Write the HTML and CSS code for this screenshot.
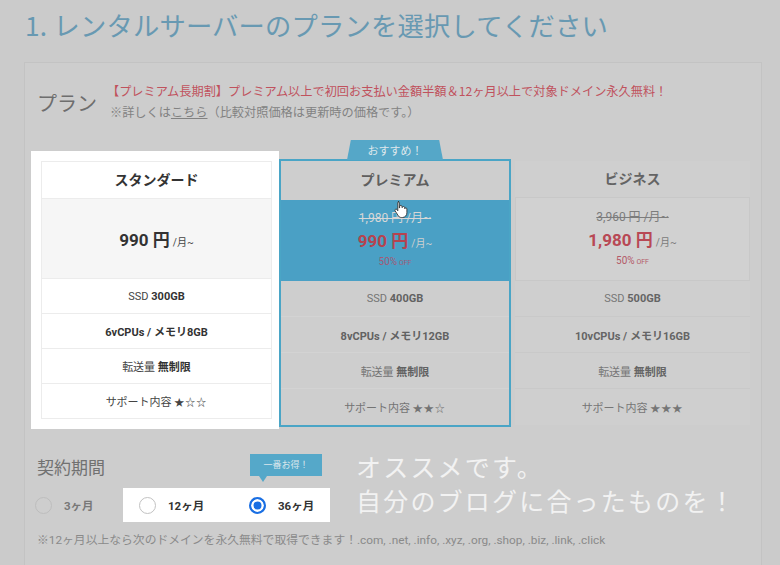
FILE: index.html
```html
<!DOCTYPE html>
<html lang="ja">
<head>
<meta charset="utf-8">
<title>プラン選択</title>
<link rel="stylesheet" href="styles.css">
</head>
<body>
<h1 class="title">1. レンタルサーバーのプランを選択してください</h1>
<div class="panel">
  <div class="plan-head">
    <div class="plan-label">プラン</div>
    <div class="plan-notes">
      <p class="note-red">【プレミアム長期割】プレミアム以上で初回お支払い金額半額＆12ヶ月以上で対象ドメイン永久無料！</p>
      <p class="note-gray">※詳しくは<span class="link">こちら</span>（比較対照価格は更新時の価格です。）</p>
    </div>
  </div>

  <div class="plans">
    <div class="col std">
      <div class="cell head">スタンダード</div>
      <div class="cell price"><div class="now"><b>990 円</b><span class="per">/月~</span></div></div>
      <div class="cell"><span>SSD <b>300GB</b></span></div>
      <div class="cell"><span><b>6vCPUs / メモリ8GB</b></span></div>
      <div class="cell"><span>転送量 <b>無制限</b></span></div>
      <div class="cell"><span>サポート内容 <span class="stars">★☆☆</span></span></div>
    </div>

    <div class="col prem">
      <div class="tab">おすすめ！</div>
      <div class="cell head">プレミアム</div>
      <div class="cell price">
        <div class="old">1,980 円 /月~</div>
        <div class="now"><b>990 円</b><span class="per">/月~</span></div>
        <div class="off">50%<small> OFF</small></div>
        <svg class="cursor" width="14" height="18" viewBox="0 0 14 18"><path d="M4 1.5c.8 0 1.3.6 1.3 1.3V8l.3-.1V6.6c0-.7.5-1.2 1.2-1.2s1.2.5 1.2 1.2v1l.3-.1c.1-.6.6-1 1.2-1 .7 0 1.2.5 1.2 1.2v1c.1-.5.6-.8 1.1-.8.7 0 1.1.5 1.1 1.200v3.7c0 2.5-1.8 4.7-4.4 4.7H7.4c-1.3 0-2.3-.6-3-1.6L1.2 11c-.4-.6-.3-1.3.3-1.7.5-.3 1.200-.2 1.500.3l.8 1.2V2.8c0-.7.5-1.3 1.2-1.3z" fill="#fff" stroke="#333" stroke-width=".9"/></svg>
      </div>
      <div class="cell"><span>SSD <b>400GB</b></span></div>
      <div class="cell"><span><b>8vCPUs / メモリ12GB</b></span></div>
      <div class="cell"><span>転送量 <b>無制限</b></span></div>
      <div class="cell"><span>サポート内容 <span class="stars">★★☆</span></span></div>
    </div>

    <div class="col biz">
      <div class="cell head">ビジネス</div>
      <div class="cell price">
        <div class="old">3,960 円 /月~</div>
        <div class="now"><b>1,980 円</b><span class="per">/月~</span></div>
        <div class="off">50%<small> OFF</small></div>
      </div>
      <div class="cell"><span>SSD <b>500GB</b></span></div>
      <div class="cell"><span><b>10vCPUs / メモリ16GB</b></span></div>
      <div class="cell"><span>転送量 <b>無制限</b></span></div>
      <div class="cell"><span>サポート内容 <span class="stars">★★★</span></span></div>
    </div>
  </div>

  <div class="term">
    <div class="term-label">契約期間</div>
    <div class="radios">
      <label class="radio dim"><span class="circle"></span>3ヶ月</label>
      <div class="hl">
        <label class="radio"><span class="circle"></span>12ヶ月</label>
        <label class="radio sel"><span class="circle on"></span>36ヶ月<span class="tip">一番お得！</span></label>
      </div>
    </div>
    <p class="domain-note">※12ヶ月以上なら次のドメインを永久無料で取得できます！.com, .net, .info, .xyz, .org, .shop, .biz, .link, .click</p>
  </div>

  <div class="overlay-text">オススメです。<br>自分のブログに合ったものを！</div>
</div>
</body>
</html>
```
FILE: styles.css
```css
html, body {
  margin: 0;
  padding: 0;
  background: #cbcbcb;
  font-family: Roboto, "Noto Sans CJK JP", sans-serif;
  width: 780px;
  height: 565px;
  overflow: hidden;
}

.title {
  margin: 0;
  padding: 6px 0 0 25px;
  font-family: "Noto Sans CJK JP", sans-serif;
  font-weight: 400;
  font-size: 26.3px;
  line-height: 38px;
  color: #6899b2;
  letter-spacing: 0.2px;
}

.panel {
  position: relative;
  margin: 18px 0 0 24px;
  width: 738px;
  height: 520px;
  border: 1px solid #c3c3c3;
  border-bottom: none;
  background: #cdcdcd;
  box-sizing: border-box;
  padding-top: 18px;
}

.plan-head {
  display: flex;
  align-items: center;
  padding-left: 12px;
}

.plan-label {
  font-family: "Noto Sans CJK JP", sans-serif;
  font-size: 20px;
  color: #6e6e6e;
  width: 70px;
}

.plan-notes p {
  margin: 0;
  font-family: "Noto Sans CJK JP", sans-serif;
  font-size: 12.2px;
  line-height: 21px;
}

.note-red { color: #c0525d; }
.note-gray { color: #828282; padding-left: 3px; }
.link { text-decoration: underline; }

.plans {
  display: flex;
  align-items: flex-start;
  margin: 28px 0 0 6px;
}

.col {
  display: flex;
  flex-direction: column;
  box-sizing: border-box;
}

.cell {
  display: flex;
  align-items: center;
  justify-content: center;
  font-size: 11px;
  height: 35px;
  box-sizing: border-box;
  font-family: Roboto, "Noto Sans CJK JP", sans-serif;
}

.cell.head {
  height: 38px;
  font-size: 14px;
  font-weight: 700;
  font-family: "Noto Sans CJK JP", sans-serif;
  padding-bottom: 3px;
}

.cell.price {
  height: 80px;
  flex-direction: column;
  position: relative;
}

.now b { font-size: 17px; font-weight: 700; }
.per { font-size: 10px; margin-left: 3px; }
.old { font-size: 12px; text-decoration: line-through; line-height: 17px; }
.off { font-size: 10px; line-height: 16px; margin-top: 2px; }
.off small { font-size: 7px; }
.stars { font-size: 10px; letter-spacing: 1px; }

/* Standard (highlighted) */
.std {
  width: 248px;
  padding: 10px 7px 10px 10px;
  background: #ffffff;
  color: #333;
}
.std .cell {
  border: 1px solid #ececec;
  border-top: none;
  color: #444;
}
.std .cell.head { border-top: 1px solid #ececec; color: #333; }
.std .cell.price { background: #f6f6f6; }
.std .cell b { color: #333; }

/* Premium */
.prem {
  position: relative;
  width: 232px;
  margin-top: 8px;
  border: 2px solid #4aa5c6;
  background: #cecece;
  color: #747474;
}
.prem .cell { height: 36px; border-bottom: 1px solid #d3d3d3; }
.prem .cell:last-child { border-bottom: none; }
.prem .cell.head { height: 39px; color: #5f5f5f; border-bottom: none; }
.prem .cell.price { height: 81px; background: #4aa0c5; border-bottom: none; }
.prem .cell b { color: #626262; }
.prem .old { color: #d7d7d7; }
.prem .now b { color: #b5434f; }
.prem .per { color: #d0d0d0; }
.prem .off { color: #a25a77; }

.tab {
  position: absolute;
  top: -21px;
  left: 66px;
  width: 96px;
  height: 20px;
  background: #55a7c8;
  color: #dfe8ec;
  font-family: "Noto Sans CJK JP", sans-serif;
  font-size: 11px;
  display: flex;
  align-items: center;
  justify-content: center;
  clip-path: polygon(4% 0, 96% 0, 100% 100%, 0 100%);
}

.cursor {
  position: absolute;
  left: 113px;
  top: 0px;
}

/* Business */
.biz {
  width: 235px;
  margin: 10px 0 0 4px;
  color: #767676;
}
.biz .cell { height: 36px; border-bottom: 1px solid #c9c9c9; background: #cfcfcf; }
.biz .cell:last-child { border-bottom: none; }
.biz .cell.head { color: #646464; border-bottom: none; }
.biz .cell.price { height: 84px; background: #d1d1d1; border: 1px solid #c8c8c8; }
.biz .cell b { color: #656565; }
.biz .old { color: #7c7c7c; }
.biz .now b { color: #b84854; }
.biz .per { color: #7a7a7a; }
.biz .off { color: #b45a68; }

/* Term */
.term {
  margin-top: 26px;
  padding-left: 12px;
}
.term-label {
  font-family: "Noto Sans CJK JP", sans-serif;
  font-size: 17px;
  color: #717171;
  line-height: 24px;
}
.radios {
  display: flex;
  align-items: center;
  margin-top: 9px;
}
.radio {
  display: flex;
  align-items: center;
  font-family: Roboto, "Noto Sans CJK JP", sans-serif;
  font-size: 11.5px;
  font-weight: 700;
  color: #333;
  position: relative;
}
.radio.dim { color: #787878; width: 88px; margin-left: -2px; }
.circle {
  width: 17px;
  height: 17px;
  border-radius: 50%;
  border: 1px solid #c2c2c2;
  background: #fff;
  margin-right: 12px;
  box-sizing: border-box;
}
.dim .circle { background: #cecece; border-color: #bdbdbd; }
.circle.on {
  border: 2px solid #1a6fe3;
  background: #1a6fe3;
  box-shadow: inset 0 0 0 2.5px #fff;
}
.hl {
  display: flex;
  align-items: center;
  background: #fff;
  height: 34px;
  width: 207px;
  box-sizing: border-box;
  padding-left: 16px;
}
.hl .radio:first-child { width: 110px; }

.tip {
  position: absolute;
  left: 1px;
  top: -43px;
  width: 72px;
  height: 22px;
  background: #55a8c9;
  color: #d9e6ec;
  font-size: 9px;
  font-weight: 400;
  font-family: "Noto Sans CJK JP", sans-serif;
  display: flex;
  align-items: center;
  justify-content: center;
}
.tip::after {
  content: "";
  position: absolute;
  left: 9px;
  bottom: -6px;
  border-left: 4px solid transparent;
  border-right: 4px solid transparent;
  border-top: 6px solid #55a8c9;
}

.domain-note {
  margin: 8px 0 0 0;
  font-family: Roboto, "Noto Sans CJK JP", sans-serif;
  font-size: 11.8px;
  color: #8a8a8a;
  letter-spacing: 0;
}

.overlay-text {
  position: absolute;
  left: 331px;
  top: 386px;
  font-family: "Noto Sans CJK JP", sans-serif;
  font-size: 25px;
  line-height: 34px;
  letter-spacing: 2.2px;
  color: #f2f2f2;
}
```
